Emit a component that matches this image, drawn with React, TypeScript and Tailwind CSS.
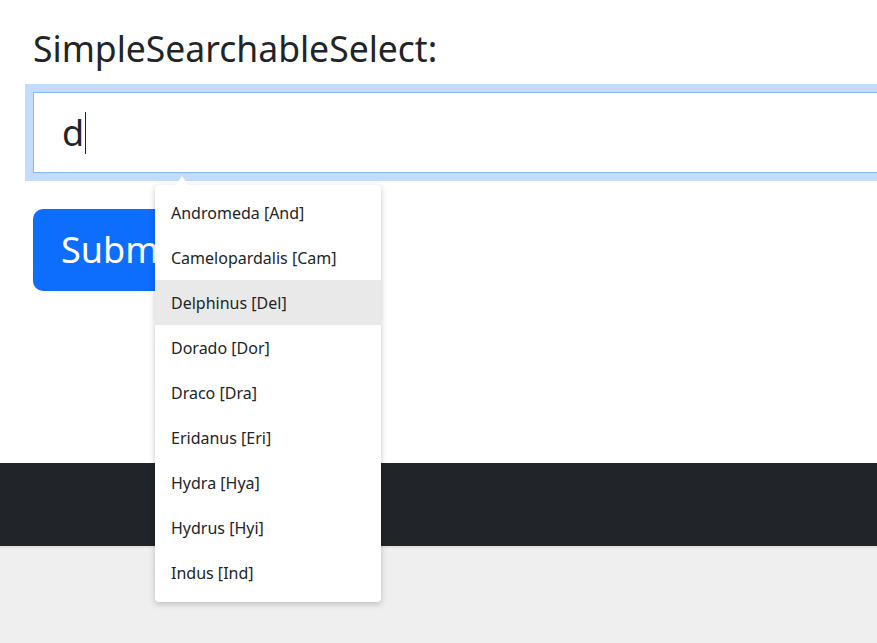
import React from "react";

const options = [
  "Andromeda [And]",
  "Camelopardalis [Cam]",
  "Delphinus [Del]",
  "Dorado [Dor]",
  "Draco [Dra]",
  "Eridanus [Eri]",
  "Hydra [Hya]",
  "Hydrus [Hyi]",
  "Indus [Ind]",
];

const font = { fontFamily: '"Noto Sans", "Open Sans", sans-serif' };

export default function App() {
  const active = 2;

  return (
    <div
      className="min-h-[643px] w-[877px] overflow-hidden bg-[#efefef] flex flex-col text-[#212529]"
      style={font}
    >
      {/* Form area */}
      <div className="h-[463px] bg-white px-[33px] pt-[25px]">
        <h1 className="text-[35.5px] leading-[46px] mb-[21px]">SimpleSearchableSelect:</h1>

        <div className="relative w-[900px]">
          <div className="h-[81px] border border-[#86b7fe] bg-white ring-[8px] ring-[#c2dbfe] flex items-center pl-[28px]">
            <span className="text-[36px] leading-none">d</span>
            <span className="w-px h-[42px] bg-[#212529] ml-[1px]" />
          </div>

          {/* Suggestions */}
          <div className="absolute left-[122px] top-[93px] z-10 w-[226px]">
            <svg
              className="absolute -top-[9px] left-[20px]"
              width="14"
              height="10"
              viewBox="0 0 14 10"
            >
              <polygon points="7,0 14,10 0,10" fill="#ffffff" />
            </svg>
            <ul className="bg-white rounded-[4px] pt-[5px] pb-[7px] shadow-[0_2px_6px_rgba(0,0,0,0.22)]">
              {options.map((o, i) => (
                <li
                  key={o}
                  className={
                    "h-[45px] flex items-center px-[16px] text-[16px] " +
                    (i === active ? "bg-[#e9e9e9]" : "")
                  }
                >
                  {o}
                </li>
              ))}
            </ul>
          </div>
        </div>

        <button className="mt-[36px] h-[82px] rounded-[10px] bg-[#0d6efd] text-white text-[36px] px-[28px]">
          Submit
        </button>
      </div>

      {/* Footer */}
      <div className="h-[83px] bg-[#212529]" />
      <div className="h-[2px] bg-[#e2e2e2]" />
      <div className="flex-1 bg-[#efefef]" />
    </div>
  );
}
